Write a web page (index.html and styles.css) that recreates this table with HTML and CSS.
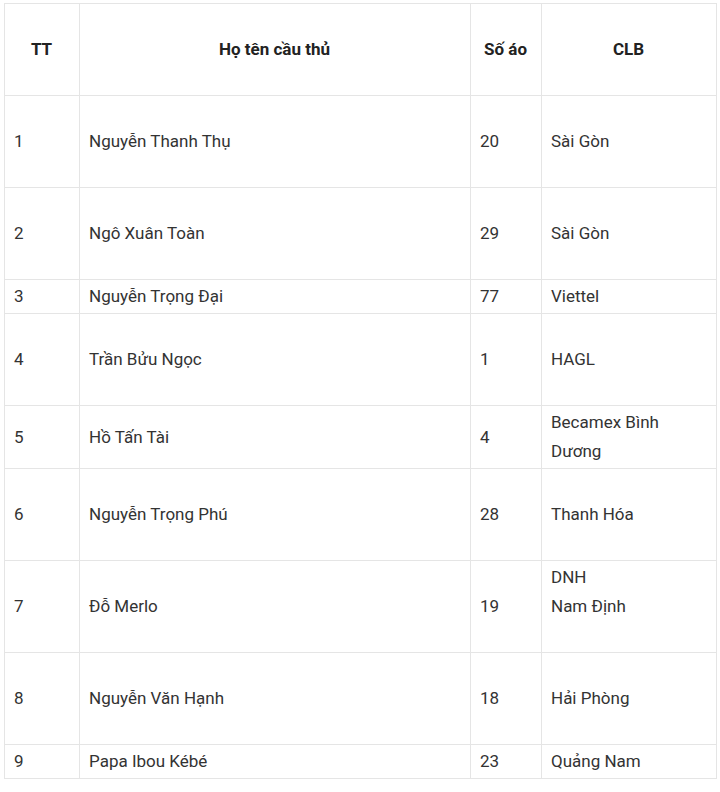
FILE: index.html
```html
<!DOCTYPE html>
<html lang="vi">
<head>
<meta charset="utf-8">
<link rel="stylesheet" href="styles.css">
</head>
<body>
<table class="roster">
  <colgroup>
    <col class="c-tt"><col class="c-name"><col class="c-num"><col class="c-club">
  </colgroup>
  <tr class="h92 head">
    <th>TT</th><th>Họ tên cầu thủ</th><th>Số áo</th><th>CLB</th>
  </tr>
  <tr class="h92"><td>1</td><td>Nguyễn Thanh Thụ</td><td>20</td><td>Sài Gòn</td></tr>
  <tr class="h92"><td>2</td><td>Ngô Xuân Toàn</td><td>29</td><td>Sài Gòn</td></tr>
  <tr class="h34"><td>3</td><td>Nguyễn Trọng Đại</td><td>77</td><td>Viettel</td></tr>
  <tr class="h92"><td>4</td><td>Trần Bửu Ngọc</td><td>1</td><td>HAGL</td></tr>
  <tr class="h63"><td>5</td><td>Hồ Tấn Tài</td><td>4</td><td>Becamex Bình Dương</td></tr>
  <tr class="h92"><td>6</td><td>Nguyễn Trọng Phú</td><td>28</td><td>Thanh Hóa</td></tr>
  <tr class="h92"><td>7</td><td>Đỗ Merlo</td><td>19</td><td>DNH<br>Nam Định<br>&nbsp;</td></tr>
  <tr class="h92"><td>8</td><td>Nguyễn Văn Hạnh</td><td>18</td><td>Hải Phòng</td></tr>
  <tr class="h34"><td>9</td><td>Papa Ibou Kébé</td><td>23</td><td>Quảng Nam</td></tr>
</table>
</body>
</html>
```
FILE: styles.css
```css
html, body {
  margin: 0;
  padding: 0;
  background: #ffffff;
}
body {
  padding: 3px 0 0 4px;
  font-family: Roboto, "Liberation Sans", Arial, sans-serif;
  font-size: 17px;
  line-height: 29px;
  color: #333333;
}
.roster {
  border-collapse: collapse;
  table-layout: fixed;
  width: 712px;
}
.c-tt { width: 75px; }
.c-name { width: 391px; }
.c-num { width: 71px; }
.c-club { width: 175px; }
.roster th,
.roster td {
  border: 1px solid #e5e5e5;
  padding: 2px 10px 2px 9px;
  vertical-align: middle;
  text-align: left;
  font-weight: 400;
}
.roster .head th {
  text-align: center;
  font-weight: 700;
  color: #222222;
}
.h92 { height: 92px; }
.h63 { height: 63px; }
.h34 { height: 34px; }
```
